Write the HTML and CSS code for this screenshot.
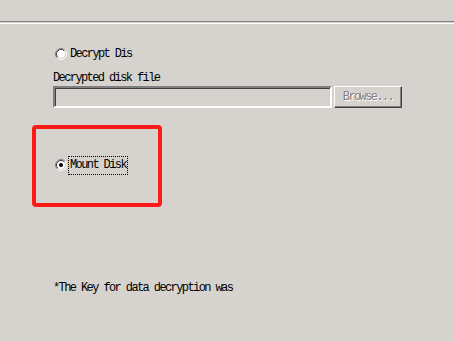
FILE: index.html
```html
<!DOCTYPE html>
<html>
<head>
<meta charset="utf-8">
<link rel="stylesheet" href="styles.css">
</head>
<body>
<div class="sep"></div>
<div class="content">
  <div class="radio-row first">
    <svg class="radio" width="12" height="12" viewBox="0 0 12 12">
      <path d="M2.11 9.89A5.5 5.5 0 0 1 9.89 2.11" fill="none" stroke="#808080"/>
      <path d="M9.89 2.11A5.5 5.5 0 0 1 2.11 9.89" fill="none" stroke="#ffffff"/>
      <circle cx="6" cy="6" r="4.5" fill="#ffffff"/>
      <path d="M2.82 9.18A4.5 4.5 0 0 1 9.18 2.82" fill="none" stroke="#404040"/>
      <path d="M9.18 2.82A4.5 4.5 0 0 1 2.82 9.18" fill="none" stroke="#d4d0c8"/>
    </svg>
    <span class="label">Decrypt Dis</span>
  </div>
  <div class="field-label">Decrypted disk file</div>
  <div class="field-row">
    <div class="field"></div>
    <div class="button"><span>Browse...</span></div>
  </div>
  <div class="highlight">
    <div class="radio-row">
      <svg class="radio" width="12" height="12" viewBox="0 0 12 12">
        <path d="M2.11 9.89A5.5 5.5 0 0 1 9.89 2.11" fill="none" stroke="#808080"/>
        <path d="M9.89 2.11A5.5 5.5 0 0 1 2.11 9.89" fill="none" stroke="#ffffff"/>
        <circle cx="6" cy="6" r="4.5" fill="#ffffff"/>
        <path d="M2.82 9.18A4.5 4.5 0 0 1 9.18 2.82" fill="none" stroke="#404040"/>
        <path d="M9.18 2.82A4.5 4.5 0 0 1 2.82 9.18" fill="none" stroke="#d4d0c8"/>
        <circle cx="6" cy="6" r="2" fill="#000000"/>
      </svg>
      <span class="label focused">Mount Disk</span>
    </div>
  </div>
  <div class="note">*The Key for data decryption was</div>
</div>
</body>
</html>
```
FILE: styles.css
```css
html, body {
  margin: 0;
  padding: 0;
  background: #d6d3ce;
  width: 454px;
  height: 341px;
  overflow: hidden;
  font-family: "Liberation Mono", monospace;
  font-size: 12px;
  letter-spacing: -1.6px;
  color: #000;
}
.sep {
  margin-top: 21px;
  height: 1px;
  border-top: 1px solid #808080;
  border-bottom: 1px solid #ffffff;
}
.content {
  padding-left: 53px;
}
.radio-row {
  display: flex;
  align-items: center;
  height: 14px;
}
.radio-row.first {
  margin-top: 23px;
  padding-left: 2px;
}
.radio {
  display: block;
  flex: none;
}
.label {
  margin-left: 2px;
  line-height: 13px;
  padding: 2px 1px;
}
.label.focused {
  outline: 1px dotted #000;
  outline-offset: 0;
}
.field-label {
  margin-top: 10px;
  line-height: 14px;
}
.field-row {
  display: flex;
  align-items: center;
  margin-top: 1px;
}
.field {
  width: 275px;
  height: 18px;
  border-top: 2px solid #808080;
  border-left: 2px solid #808080;
  border-right: 2px solid #ffffff;
  border-bottom: 2px solid #ffffff;
  box-shadow: inset 1px 1px 0 #404040, inset -1px -1px 0 #d4d0c8;
  background: #d6d3ce;
}
.button {
  margin-left: 2px;
  width: 66px;
  height: 20px;
  border-top: 1px solid #ffffff;
  border-left: 1px solid #ffffff;
  border-right: 1px solid #404040;
  border-bottom: 1px solid #404040;
  box-shadow: inset -1px -1px 0 #808080;
  display: flex;
  align-items: center;
  justify-content: center;
  color: #808080;
  text-shadow: 1px 1px 0 #ffffff;
}
.highlight {
  box-sizing: border-box;
  margin-top: 17px;
  margin-left: -21px;
  width: 130px;
  height: 82px;
  border: 4px solid #ff1a1a;
  border-radius: 4px;
  padding-left: 19px;
  padding-top: 29px;
}
.note {
  margin-top: 74px;
  line-height: 14px;
}
```
